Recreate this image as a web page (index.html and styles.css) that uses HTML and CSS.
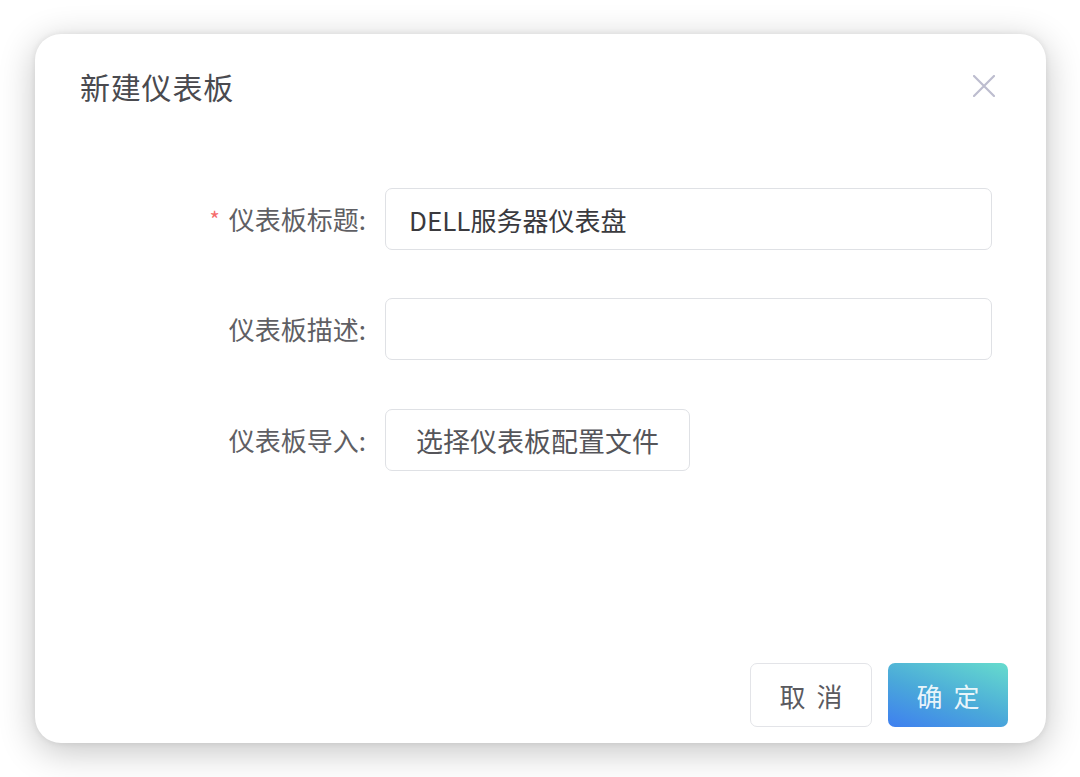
FILE: index.html
```html
<!DOCTYPE html>
<html lang="zh-CN">
<head>
<meta charset="utf-8">
<title>新建仪表板</title>
<link rel="stylesheet" href="styles.css">
</head>
<body>
<div class="dialog">
  <div class="dialog-header">
    <span class="dialog-title">新建仪表板</span>
    <button class="close-btn" aria-label="关闭">
      <svg width="22" height="22" viewBox="0 0 22 22"><path d="M1 1 L21 21 M21 1 L1 21" stroke="#bdbdcf" stroke-width="2.2" stroke-linecap="round" fill="none"/></svg>
    </button>
  </div>
  <div class="dialog-body">
    <div class="form-row">
      <label class="form-label"><span class="req">*</span>仪表板标题:</label>
      <div class="form-control"><div class="input">DELL服务器仪表盘</div></div>
    </div>
    <div class="form-row">
      <label class="form-label">仪表板描述:</label>
      <div class="form-control"><div class="input"></div></div>
    </div>
    <div class="form-row">
      <label class="form-label">仪表板导入:</label>
      <div class="form-control"><button class="file-btn">选择仪表板配置文件</button></div>
    </div>
  </div>
  <div class="dialog-footer">
    <button class="btn btn-cancel">取消</button>
    <button class="btn btn-primary">确定</button>
  </div>
</div>
</body>
</html>
```
FILE: styles.css
```css
html, body {
  margin: 0;
  padding: 0;
  background: #ffffff;
  min-height: 777px;
}
body {
  padding: 34px 0 0 35px;
  box-sizing: border-box;
  font-family: "Noto Sans CJK SC", "Noto Sans", sans-serif;
  color: #606266;
}
.dialog {
  width: 1011px;
  height: 709px;
  box-sizing: border-box;
  background: #ffffff;
  border-radius: 26px;
  box-shadow: 0 8px 36px rgba(0, 0, 0, 0.24), 0 0 6px rgba(0, 0, 0, 0.08);
  display: flex;
  flex-direction: column;
}
.dialog-header {
  height: 108px;
  padding: 0 40px 4px 45px;
  display: flex;
  align-items: center;
  justify-content: space-between;
  box-sizing: border-box;
}
.dialog-title {
  font-size: 30px;
  color: #4a4a4f;
  line-height: 1;
  letter-spacing: 0.8px;
}
.close-btn {
  border: 0;
  background: none;
  padding: 0;
  width: 22px;
  height: 22px;
  display: flex;
  margin-right: 11px;
}
.dialog-body {
  flex: 1;
  padding: 46px 54px 0 0;
  display: flex;
  flex-direction: column;
  gap: 48px;
}
.form-row {
  display: flex;
  align-items: center;
  height: 62px;
}
.form-row:nth-child(3) { margin-top: 1px; }
.form-label {
  width: 350px;
  flex: none;
  text-align: right;
  font-size: 26px;
  color: #5f5f64;
  padding-right: 19px;
  box-sizing: border-box;
  white-space: nowrap;
  line-height: 1;
}
.req {
  color: #f56c6c;
  font-size: 22px;
  margin-right: 9px;
  position: relative;
  top: -2px;
}
.form-control {
  flex: 1;
  display: flex;
}
.input {
  flex: 1;
  height: 62px;
  box-sizing: border-box;
  border: 1.5px solid #dfe1e5;
  border-radius: 7px;
  padding: 0 23px;
  font-size: 26px;
  color: #3a3a3e;
  display: flex;
  align-items: center;
}
.file-btn {
  height: 62px;
  padding: 0 30px;
  border: 1.5px solid #dfe1e5;
  border-radius: 7px;
  background: #fff;
  font-family: inherit;
  font-size: 27px;
  color: #55555a;
}
.dialog-footer {
  display: flex;
  justify-content: flex-end;
  gap: 16px;
  padding: 0 38px 16px 0;
}
.btn {
  height: 64px;
  border-radius: 7px;
  font-family: inherit;
  font-size: 26px;
  letter-spacing: 11px;
  padding: 0 0 0 11px;
  box-sizing: border-box;
}
.btn-cancel {
  width: 122px;
  background: #fff;
  border: 1.5px solid #e3e4e8;
  color: #5a5a5f;
}
.btn-primary {
  width: 120px;
  border: 0;
  color: rgba(255, 255, 255, 0.9);
  background: linear-gradient(20deg, #3e7ff0 0%, #4aa8da 45%, #66dccd 100%);
}
```
